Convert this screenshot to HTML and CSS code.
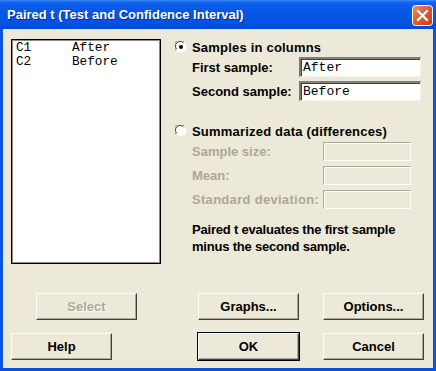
FILE: index.html
```html
<!DOCTYPE html>
<html>
<head>
<meta charset="utf-8">
<link rel="stylesheet" href="styles.css">
</head>
<body>
<div class="window">
  <div class="titlebar">
    <span class="title">Paired t (Test and Confidence Interval)</span>
    <div class="close">
      <svg width="21" height="21" viewBox="0 0 21 21">
        <defs>
          <linearGradient id="cg" x1="0" y1="0" x2="1" y2="1">
            <stop offset="0" stop-color="#F0926C"/>
            <stop offset="0.5" stop-color="#E0582F"/>
            <stop offset="1" stop-color="#C23B12"/>
          </linearGradient>
        </defs>
        <rect x="0.5" y="0.5" width="20" height="20" rx="3" fill="url(#cg)" stroke="#fff"/>
        <path d="M6 6 L15 15 M15 6 L6 15" stroke="#fff" stroke-width="2.2" stroke-linecap="square"/>
      </svg>
    </div>
  </div>
  <div class="client">
    <div class="main">
      <div class="listbox">
        <div class="item"><span class="col">C1</span><span>After</span></div>
        <div class="item"><span class="col">C2</span><span>Before</span></div>
      </div>
      <div class="panel">
        <div class="opt">
          <svg class="radio" width="12" height="12" viewBox="0 0 12 12">
            <circle cx="6" cy="6" r="5.5" fill="#fff" stroke="none"/>
            <path d="M0.8 9 A5.5 5.5 0 0 1 9 0.8" stroke="#8c8c8c" stroke-width="1" fill="none"/>
            <path d="M1.8 8.3 A4.5 4.5 0 0 1 8.3 1.8" stroke="#404040" stroke-width="1" fill="none"/>
            <circle cx="6" cy="6" r="2" fill="#000"/>
          </svg>
          <span class="lbl">Samples in columns</span>
        </div>
        <div class="field">
          <span class="lbl">First sample:</span>
          <div class="input mono">After</div>
        </div>
        <div class="field second">
          <span class="lbl">Second sample:</span>
          <div class="input mono">Before</div>
        </div>
        <div class="opt opt2">
          <svg class="radio" width="12" height="12" viewBox="0 0 12 12">
            <circle cx="6" cy="6" r="5.5" fill="#fff" stroke="none"/>
            <path d="M0.8 9 A5.5 5.5 0 0 1 9 0.8" stroke="#8c8c8c" stroke-width="1" fill="none"/>
            <path d="M1.8 8.3 A4.5 4.5 0 0 1 8.3 1.8" stroke="#404040" stroke-width="1" fill="none"/>
          </svg>
          <span class="lbl">Summarized data (differences)</span>
        </div>
        <div class="sfield">
          <span class="lbl dis">Sample size:</span>
          <div class="input disabled"></div>
        </div>
        <div class="sfield gap">
          <span class="lbl dis">Mean:</span>
          <div class="input disabled"></div>
        </div>
        <div class="sfield gap">
          <span class="lbl dis wide">Standard deviation:</span>
          <div class="input disabled"></div>
        </div>
        <p class="note">Paired t evaluates the first sample<br>minus the second sample.</p>
      </div>
    </div>
    <div class="buttons">
      <div class="btn btn-select dis">Select</div>
      <div class="btn">Graphs...</div>
      <div class="btn">Options...</div>
      <div class="btn">Help</div>
      <div class="btn default">OK</div>
      <div class="btn">Cancel</div>
    </div>
  </div>
</div>
</body>
</html>
```
FILE: styles.css
```css
html, body {
  margin: 0;
  padding: 0;
  background: #ECE9D8;
}
.window {
  width: 436px;
  height: 371px;
  display: flex;
  flex-direction: column;
  font-family: "Liberation Sans", Arial, sans-serif;
  font-size: 13px;
  font-weight: bold;
  color: #000;
}
.titlebar {
  height: 29px;
  box-sizing: border-box;
  display: flex;
  justify-content: space-between;
  align-items: flex-start;
  padding: 0 3px 0 7px;
  background: linear-gradient(#3C8EF5 0px, #1466EE 2px, #0A5BE8 5px, #0556E6 14px, #0453E2 22px, #0049D4 29px);
}
.title {
  color: #fff;
  font-size: 13px;
  line-height: 29px;
  text-shadow: 1px 1px 0 #0A2A8A;
}
.close {
  margin-top: 5px;
  width: 21px;
  height: 21px;
}
.close svg { display: block; }
.client {
  flex: 1;
  background: #ECE9D8;
  border-left: 3px solid #0A55E4;
  border-right: 3px solid #0A55E4;
  border-bottom: 3px solid #0A50DC;
  padding: 10px 8px 0 8px;
}
.main {
  display: flex;
  height: 225px;
}
.listbox {
  width: 150px;
  height: 225px;
  box-sizing: border-box;
  background: #fff;
  border: 1px solid #000;
  box-shadow: inset 1px 1px 0 #404040;
  outline: 1px solid #8E8C80;
  outline-offset: -2px;
  padding: 1px 4px;
  font-family: "Liberation Mono", "Courier New", monospace;
  font-weight: normal;
  font-size: 12.7px;
  line-height: 14px;
}
.item { display: flex; }
.col { width: 56px; }
.mono {
  font-family: "Liberation Mono", "Courier New", monospace;
  font-weight: normal;
  font-size: 13px;
}
.panel {
  margin-left: 14px;
  flex: 1;
  display: flex;
  flex-direction: column;
}
.opt {
  height: 16px;
  display: flex;
  align-items: center;
  gap: 5px;
}
.opt .lbl { letter-spacing: 0.2px; }
.opt2 { margin-top: 22px; }
.radio { display: block; flex: none; }
.field {
  margin-left: 17px;
  margin-top: 2px;
  height: 20px;
  display: grid;
  grid-template-columns: 107px 122px;
  align-items: center;
}
.field.second { margin-top: 4px; }
.sfield {
  margin-left: 17px;
  margin-top: 3px;
  height: 19px;
  display: grid;
  grid-template-columns: 131px 88px;
  align-items: center;
}
.sfield.gap { margin-top: 5px; }
.wide { letter-spacing: 0.3px; }
.input {
  height: 100%;
  box-sizing: border-box;
  background: #fff;
  border-top: 2px solid #808078;
  border-left: 2px solid #7A786E;
  border-right: 1px solid #F4F2E8;
  border-bottom: 1px solid #F4F2E8;
  box-shadow: inset 1px 1px 0 #404040;
  padding-left: 2px;
  display: flex;
  align-items: center;
  line-height: 16px;
}
.input.disabled {
  background: #ECE9D8;
  border-top: 1px solid #ACA899;
  border-left: 1px solid #ACA899;
  border-right: 1px solid #fff;
  border-bottom: 1px solid #fff;
  box-shadow: inset 1px 1px 0 #fff;
}
.dis { color: #ACA899; }
.note {
  margin: 12px 0 0 17px;
  line-height: 17px;
  letter-spacing: -0.2px;
}
.buttons {
  margin-top: 29px;
  display: grid;
  grid-template-columns: 187px 125px 101px;
  grid-auto-rows: 27px;
  row-gap: 13px;
}
.btn {
  width: 101px;
  height: 27px;
  box-sizing: border-box;
  display: flex;
  align-items: center;
  justify-content: center;
  background: #ECE9D8;
  border-top: 1px solid #fff;
  border-left: 1px solid #fff;
  border-right: 1px solid #404040;
  border-bottom: 1px solid #404040;
  box-shadow: inset -1px -1px 0 #ACA899;
}
.btn-select { margin-left: 25px; }
.btn.dis { text-shadow: 1px 1px 0 #fff; }
.btn.default {
  outline: 1px solid #000;
}
```
